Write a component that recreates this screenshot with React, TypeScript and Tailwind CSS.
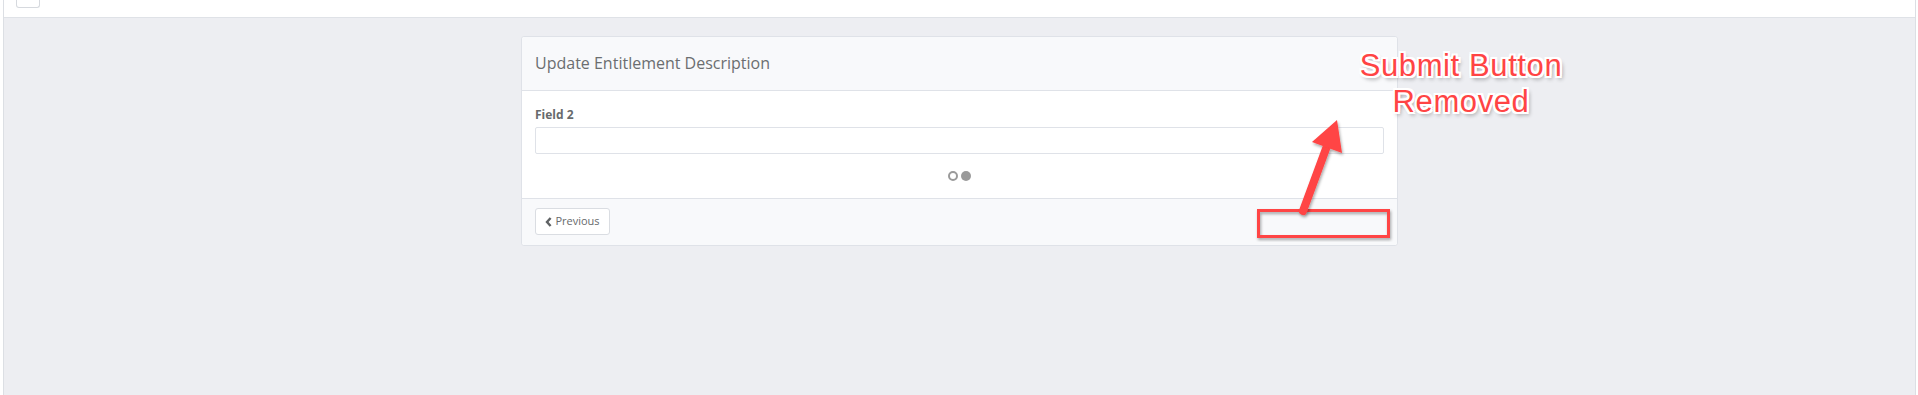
import React from "react";

export default function App() {
  return (
    <div className="relative w-[1918px] h-[395px] overflow-hidden bg-white font-['Open_Sans',sans-serif]">
      <div className="ml-[3px] mr-[2px] h-full border-l border-r border-[#dcdfe4] bg-[#edeef2] flex flex-col">
        {/* top bar */}
        <div className="h-[18px] shrink-0 bg-white border-b border-[#dfe2e7] pl-[12px]">
          <div className="w-[24px] h-[8px] border border-t-0 border-[#d6d9de] rounded-b-[3px] bg-white" />
        </div>
        {/* card */}
        <div className="mt-[18px] mx-auto w-[877px] border border-[#dfe2e8] rounded-[3px] bg-white">
          <div className="h-[54px] bg-[#f8f9fb] border-b border-[#dfe2e8] rounded-t-[3px] flex items-center px-[13px]">
            <span className="text-[16px] text-[#6b6e70] leading-none -mt-[1px]">Update Entitlement Description</span>
          </div>
          <div className="px-[13px] pt-[16px] pb-[17px]">
            <div className="text-[12px] font-bold text-[#676a6c] leading-[16px] mb-[4px]">Field 2</div>
            <div className="h-[27px] w-full border border-[#dfe2e8] rounded-[2px] bg-white" />
            <div className="mt-[17px] flex justify-center items-center gap-[3px]">
              <span className="w-[10px] h-[10px] rounded-full border-2 border-[#9a9a9a]" />
              <span className="w-[10px] h-[10px] rounded-full bg-[#9a9a9a]" />
            </div>
          </div>
          <div className="h-[47px] bg-[#f8f9fb] border-t border-[#dfe2e8] rounded-b-[3px] px-[13px] pt-[9px]">
            <div className="w-[75px] h-[27px] border border-[#dadde2] rounded-[3px] bg-white flex items-center justify-center gap-[3px] text-[11px] text-[#676a6c]">
              <svg width="7" height="10" viewBox="0 0 7 10">
                <path d="M5.6 1 L2 5 L5.6 9" fill="none" stroke="#5f6264" strokeWidth="2.4" />
              </svg>
              <span>Previous</span>
            </div>
          </div>
        </div>
      </div>

      {/* annotation overlay */}
      <svg className="absolute left-0 top-0 pointer-events-none" width="1918" height="395">
        <defs>
          <filter id="sh" x="-20%" y="-20%" width="140%" height="140%">
            <feDropShadow dx="1" dy="2" stdDeviation="1.6" floodColor="#000" floodOpacity="0.35" />
          </filter>
        </defs>
        <rect x="1258.5" y="210.5" width="130" height="26" fill="none" stroke="#ff4444" strokeWidth="3" filter="url(#sh)" />
        <g filter="url(#sh)">
          <line x1="1303" y1="211" x2="1327" y2="146" stroke="#ff4444" strokeWidth="8" strokeLinecap="round" />
          <polygon points="1337,120 1312,142 1342,153" fill="#ff4444" />
        </g>
      </svg>
      <div className="absolute left-[1330px] top-[48px] w-[262px] text-center font-['Liberation_Sans',Arial,sans-serif] text-[31px] leading-[36px] tracking-[0.6px] text-[#ff4444] [text-shadow:-2px_-2px_0_#fff,2px_-2px_0_#fff,-2px_2px_0_#fff,2px_2px_0_#fff,0_-2px_0_#fff,0_2px_0_#fff,-2px_0_0_#fff,2px_0_0_#fff,2px_3px_4px_rgba(0,0,0,0.45)]">
        <div>Submit Button</div>
        <div>Removed</div>
      </div>
    </div>
  );
}
